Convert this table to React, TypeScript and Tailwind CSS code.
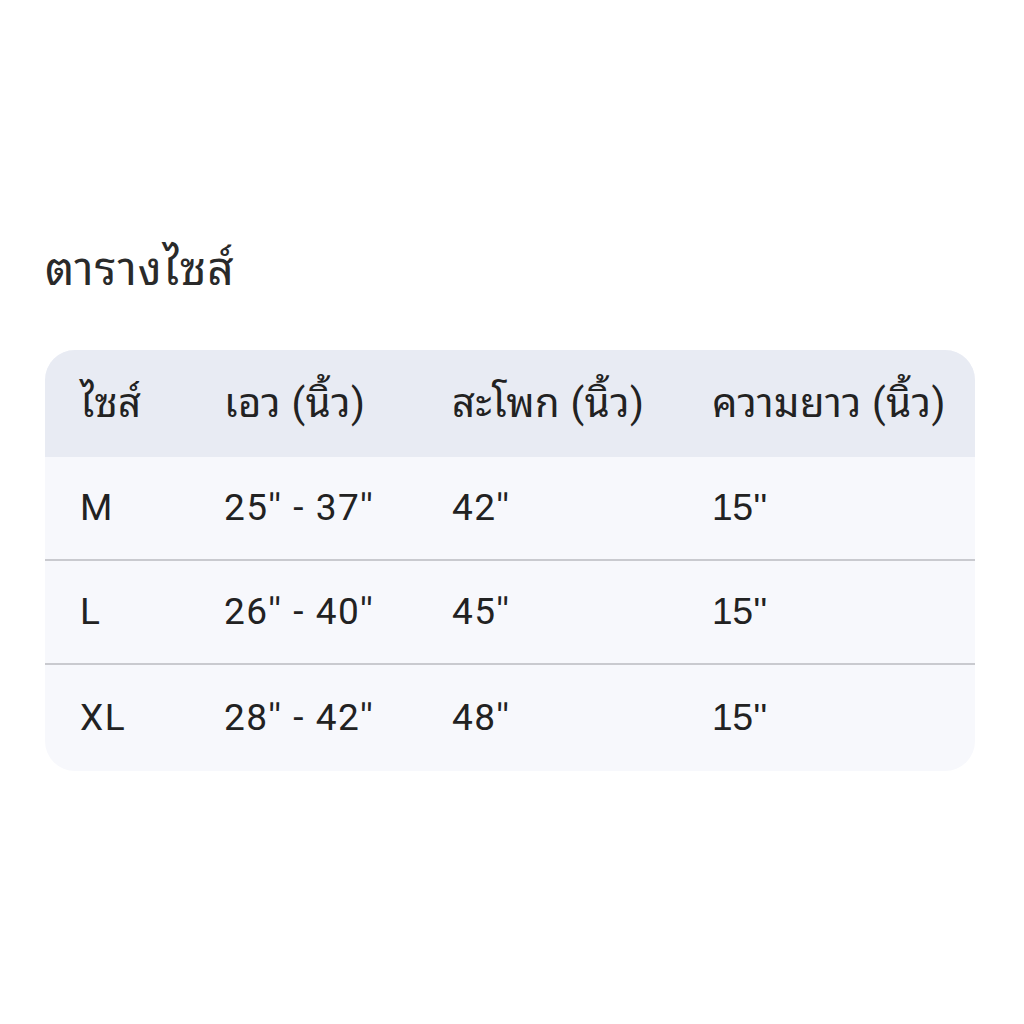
import React from "react";

const rows = [
  ["M", "25'' - 37''", "42''", "15''"],
  ["L", "26'' - 40''", "45''", "15''"],
  ["XL", "28'' - 42''", "48''", "15''"],
];

const thai = "Roboto, 'Noto Sans Thai Looped', Loma, Garuda, 'Noto Sans Thai', 'Noto Sans', sans-serif";

export default function App() {
  return (
    <div className="w-[1024px] h-[1024px] bg-white text-[#222222]" style={{ fontFamily: thai }}>
      <div className="pt-[238px] pl-[45px] pr-[49px]">
        <h1 className="text-[46px] leading-[62px] font-normal text-[#2a2a2a] tracking-[1px]">ตารางไซส์</h1>
        <div className="mt-[50px] rounded-[30px] overflow-hidden bg-[#f7f8fc]">
          <div className="grid grid-cols-[144px_228px_260px_1fr] items-center h-[107px] bg-[#e8ebf3] text-[40px] pl-[35px] tracking-[0.5px]">
            <div>ไซส์</div>
            <div>เอว (นิ้ว)</div>
            <div>สะโพก (นิ้ว)</div>
            <div>ความยาว (นิ้ว)</div>
          </div>
          {rows.map((r, i) => (
            <div
              key={i}
              className={`grid grid-cols-[144px_228px_260px_1fr] items-center text-[37px] pl-[35px] tracking-[1.5px] ${i < 2 ? "h-[104px] border-b-2 border-[#c9cacf]" : "h-[106px]"}`}
            >
              <div>{r[0]}</div>
              <div>{r[1]}</div>
              <div>{r[2]}</div>
              <div className="tracking-[0px]" style={{ fontFamily: "'Liberation Sans', Arial, sans-serif" }}>{r[3]}</div>
            </div>
          ))}
        </div>
      </div>
    </div>
  );
}
